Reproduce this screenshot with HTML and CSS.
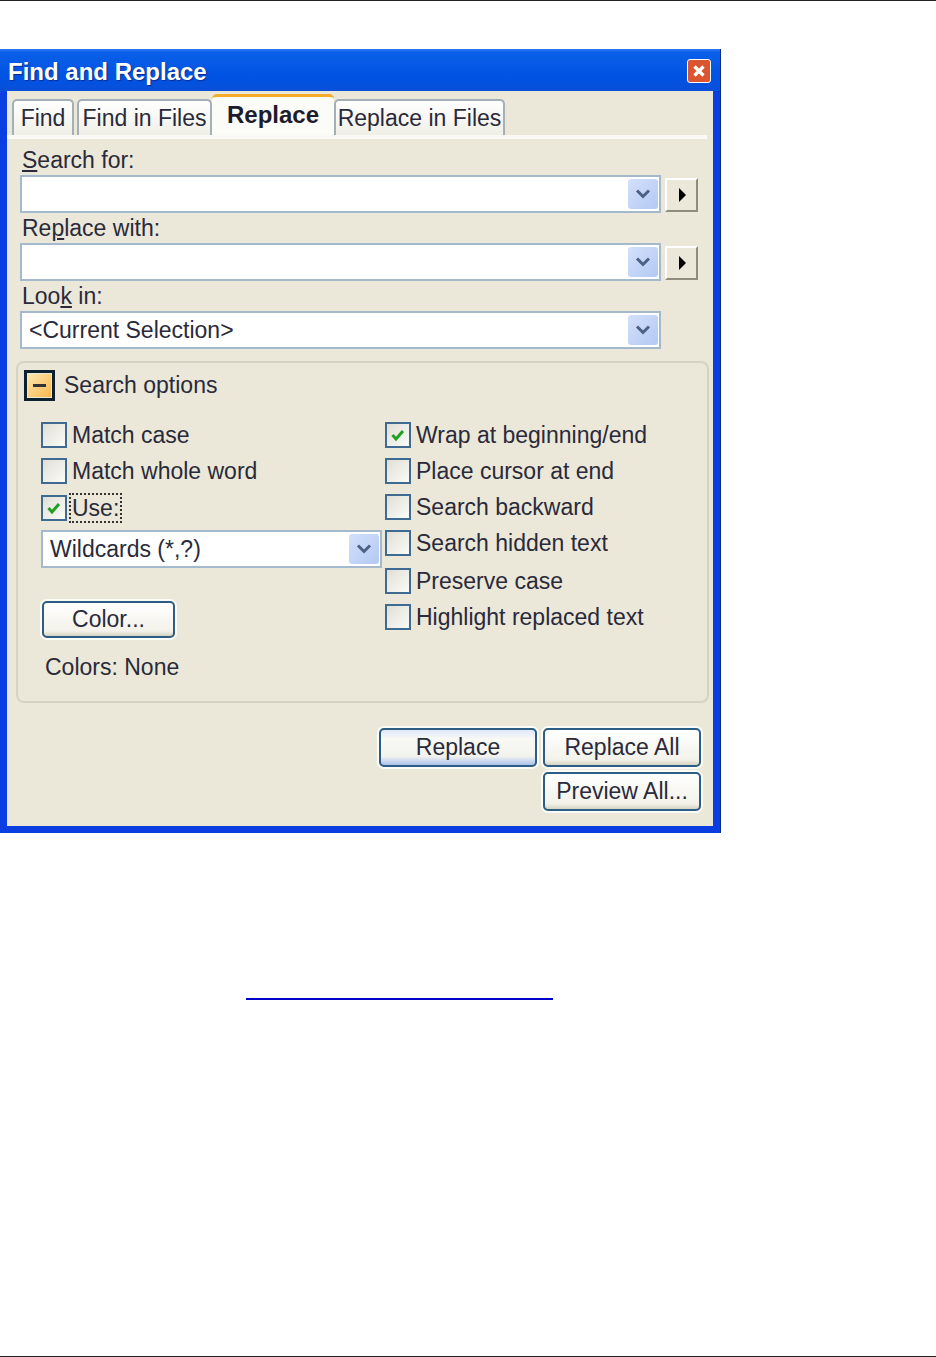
FILE: index.html
```html
<!DOCTYPE html>
<html lang="en">
<head>
	<meta charset="UTF-8">
	<title>Find and Replace</title>
	<link rel="stylesheet" href="styles.css">
</head>
<body>
<div class="top-rule"></div>
<div class="dialog">
	<div class="titlebar">
		<span class="title">Find and Replace</span>
		<span class="close">
			<svg width="18" height="18" viewBox="0 0 18 18"><path d="M4.5 4.5l9 9M13.500 4.500l-9 9" stroke="#fff" stroke-width="3.200" fill="none"/></svg>
		</span>
	</div>
	<div class="client">
		<div class="tabs">
			<div class="tab tab-find">Find</div>
			<div class="tab tab-files">Find in Files</div>
			<div class="tab tab-active">Replace</div>
			<div class="tab tab-rfiles">Replace in Files</div>
		</div>
		<div class="panel">
			<div class="label"><u>S</u>earch for:</div>
			<div class="field-row">
				<div class="combo"><span class="combo-text"></span><span class="drop"><svg width="18" height="12" viewBox="0 0 18 12"><path d="M3 2.500l6 6 6-6" stroke="#4d6185" stroke-width="3" fill="none"/></svg></span></div>
				<div class="arrow-btn"><svg width="10" height="14" viewBox="0 0 10 14"><path d="M2 0l7 7-7 7z" fill="#000"/></svg></div>
			</div>
			<div class="label">Re<u>p</u>lace with:</div>
			<div class="field-row">
				<div class="combo"><span class="combo-text"></span><span class="drop"><svg width="18" height="12" viewBox="0 0 18 12"><path d="M3 2.500l6 6 6-6" stroke="#4d6185" stroke-width="3" fill="none"/></svg></span></div>
				<div class="arrow-btn"><svg width="10" height="14" viewBox="0 0 10 14"><path d="M2 0l7 7-7 7z" fill="#000"/></svg></div>
			</div>
			<div class="label">Loo<u>k</u> in:</div>
			<div class="field-row">
				<div class="combo"><span class="combo-text">&lt;Current Selection&gt;</span><span class="drop"><svg width="18" height="12" viewBox="0 0 18 12"><path d="M3 2.500l6 6 6-6" stroke="#4d6185" stroke-width="3" fill="none"/></svg></span></div>
			</div>
			<div class="options">
				<div class="options-head">
					<span class="toggle"><span class="toggle-in"><span class="toggle-dash"></span></span></span>
					<span>Search options</span>
				</div>
				<div class="options-cols">
					<div class="col-left">
						<div class="check-row"><span class="box"></span>Match case</div>
						<div class="check-row"><span class="box"></span>Match whole word</div>
						<div class="check-row row-use"><span class="box"><svg width="20" height="20" viewBox="0 0 20 20"><path d="M4.500 10l3.500 4 7-8" stroke="#21a121" stroke-width="3" fill="none"/></svg></span><span class="focus">Use:</span></div>
						<div class="combo combo-small"><span class="combo-text">Wildcards (*,?)</span><span class="drop"><svg width="18" height="12" viewBox="0 0 18 12"><path d="M3 2.500l6 6 6-6" stroke="#4d6185" stroke-width="3" fill="none"/></svg></span></div>
						<div class="btn btn-color">Color...</div>
						<div class="colors">Colors: None</div>
					</div>
					<div class="col-right">
						<div class="check-row"><span class="box"><svg width="20" height="20" viewBox="0 0 20 20"><path d="M4.500 10l3.500 4 7-8" stroke="#21a121" stroke-width="3" fill="none"/></svg></span>Wrap at beginning/end</div>
						<div class="check-row"><span class="box"></span>Place cursor at end</div>
						<div class="check-row"><span class="box"></span>Search backward</div>
						<div class="check-row"><span class="box"></span>Search hidden text</div>
						<div class="check-row row-gap"><span class="box"></span>Preserve case</div>
						<div class="check-row"><span class="box"></span>Highlight replaced text</div>
					</div>
				</div>
			</div>
			<div class="actions">
				<div class="btn btn-default">Replace</div>
				<div class="btn-stack">
					<div class="btn">Replace All</div>
					<div class="btn">Preview All...</div>
				</div>
			</div>
		</div>
	</div>
</div>
<div class="link-line"></div>
<div class="bottom-rule"></div>
</body>
</html>
```

FILE: styles.css
```css
html, body { margin: 0; padding: 0; }
body {
	width: 936px;
	height: 1357px;
	background: #fff;
	overflow: hidden;
	display: flex;
	flex-direction: column;
	font-family: "Liberation Sans", Arial, sans-serif;
	font-size: 23px;
	color: #2a2a3a;
}
.top-rule { height: 1px; background: #222; }
.dialog {
	width: 721px;
	height: 784px;
	margin-top: 48px;
	box-sizing: border-box;
	display: flex;
	flex-direction: column;
	background: #0a3ee0;
	padding: 0 7px 7px 7px;
	border-right: 1px solid #0a2a90;
}
.titlebar {
	height: 42px;
	margin: 0 -7px;
	padding: 0 9px 0 8px;
	display: flex;
	align-items: center;
	justify-content: space-between;
	background: linear-gradient(#2f7bf2 0, #0a5fe8 8%, #0053e2 70%, #0a4fd8 100%);
}
.title { color: #fff; font-weight: bold; font-size: 24px; margin-top: 4px; text-shadow: 1px 1px 1px #0a2a90; }
.close {
	width: 24px;
	height: 24px;
	box-sizing: border-box;
	border: 1px solid #fff;
	border-radius: 3px;
	background: #db5530;
	display: flex;
	align-items: center;
	justify-content: center;
	margin-top: 1px;
}
.client { flex: 1; background: #ebe8d9; display: flex; flex-direction: column; padding: 0 3px 0 0; }
.tabs { display: flex; align-items: flex-end; height: 44px; padding-left: 5px; }
.tab {
	box-sizing: border-box;
	height: 36px;
	border: 2px solid #a3b0b8;
	border-bottom: 0;
	border-radius: 5px 5px 0 0;
	background: linear-gradient(#fff, #f0efe6);
	display: flex;
	align-items: center;
	justify-content: center;
}
.tab-find { width: 62px; margin-right: 3px; }
.tab-files { width: 135px; }
.tab-active {
	width: 122px;
	height: 41px;
	font-weight: bold;
	font-size: 24px;
	color: #1c1c2c;
	background: #fbfbf8;
	border: 0;
	border-top: 3px solid #f5ab2c;
	padding-bottom: 2px;
}
.tab-rfiles { width: 171px; }
.panel {
	flex: 1;
	border-top: 4px solid #faf9f5;
	margin: 0 3px 0 0;
	padding: 8px 0 0 13px;
	display: flex;
	flex-direction: column;
	position: relative;
}
.label { height: 26px; line-height: 26px; padding-left: 2px; }
.field-row { display: flex; align-items: center; height: 38px; margin-top: 2px; margin-bottom: 2px; }
.combo {
	box-sizing: border-box;
	width: 641px;
	height: 38px;
	border: 2px solid #a5b9cc;
	background: #fff;
	display: flex;
	align-items: center;
	justify-content: space-between;
	padding: 0 1px 0 7px;
}
.drop {
	width: 30px;
	height: 30px;
	border-radius: 3px;
	background: linear-gradient(135deg, #d3e0fb, #b3c9f4);
	display: flex;
	align-items: center;
	justify-content: center;
}
.arrow-btn {
	box-sizing: border-box;
	width: 33px;
	height: 34px;
	margin-left: 4px;
	margin-top: 2px;
	background: #ebe8d9;
	border-top: 2px solid #fff;
	border-left: 2px solid #fff;
	border-right: 2px solid #8f8c7e;
	border-bottom: 2px solid #8f8c7e;
	display: flex;
	align-items: center;
	justify-content: center;
}
.options {
	box-sizing: border-box;
	width: 693px;
	height: 342px;
	margin: 10px 0 0 -4px;
	border: 2px solid #d6d3c2;
	border-radius: 8px;
	padding: 7px 0 0 6px;
}
.options-head { display: flex; align-items: center; height: 30px; gap: 9px; }
.toggle {
	box-sizing: border-box;
	width: 31px;
	height: 31px;
	border: 3px solid #0c2030;
	padding: 1px;
	display: block;
}
.toggle-in {
	height: 100%;
	display: flex;
	align-items: center;
	justify-content: center;
	background: linear-gradient(135deg, #fde6b0, #f8b84c);
}
.toggle-dash { width: 13px; height: 3px; background: #333; }
.options-cols { display: flex; margin-top: 17px; }
.col-left { width: 361px; padding-left: 17px; box-sizing: border-box; }
.col-right { padding-top: 0; }
.check-row { display: flex; align-items: center; height: 36px; gap: 5px; white-space: nowrap; }
.row-use { height: 38px; }
.row-gap { margin-top: 2px; }
.box {
	box-sizing: border-box;
	width: 26px;
	height: 26px;
	border: 2px solid #3f6b92;
	background: linear-gradient(135deg, #e0dfd6, #fbfbf8);
	display: flex;
	align-items: center;
	justify-content: center;
}
.focus { outline: 2px dotted #333; outline-offset: 0; padding: 0 1px; line-height: 26px; margin-left: -1px; }
.combo-small { width: 341px; margin-top: 3px; }
.btn {
	box-sizing: border-box;
	border: 2px solid #2d5d85;
	border-radius: 5px;
	background: linear-gradient(#fff, #f3f2ea 85%, #d6d3c4);
	display: flex;
	align-items: center;
	justify-content: center;
	box-shadow: 0 0 0 2px #fbfbf8;
}
.btn-color { width: 133px; height: 37px; margin: 33px 0 0 1px; }
.colors { margin: 16px 0 0 4px; line-height: 26px; }
.actions { display: flex; justify-content: flex-end; gap: 6px; margin: 25px 6px 0 0; }
.btn-stack { display: flex; flex-direction: column; gap: 5px; }
.btn-stack .btn { width: 158px; height: 39px; }
.btn-default {
	width: 158px;
	height: 39px;
	border-color: #2d5d85;
	background: linear-gradient(#dfe8fb, #f8f8f5 25%, #f3f3ee 75%, #a9c2ee);
}
.link-line { width: 307px; height: 2px; background: #0000cc; margin: 165px 0 0 246px; }
.bottom-rule { height: 1px; background: #222; margin-top: auto; }
```
